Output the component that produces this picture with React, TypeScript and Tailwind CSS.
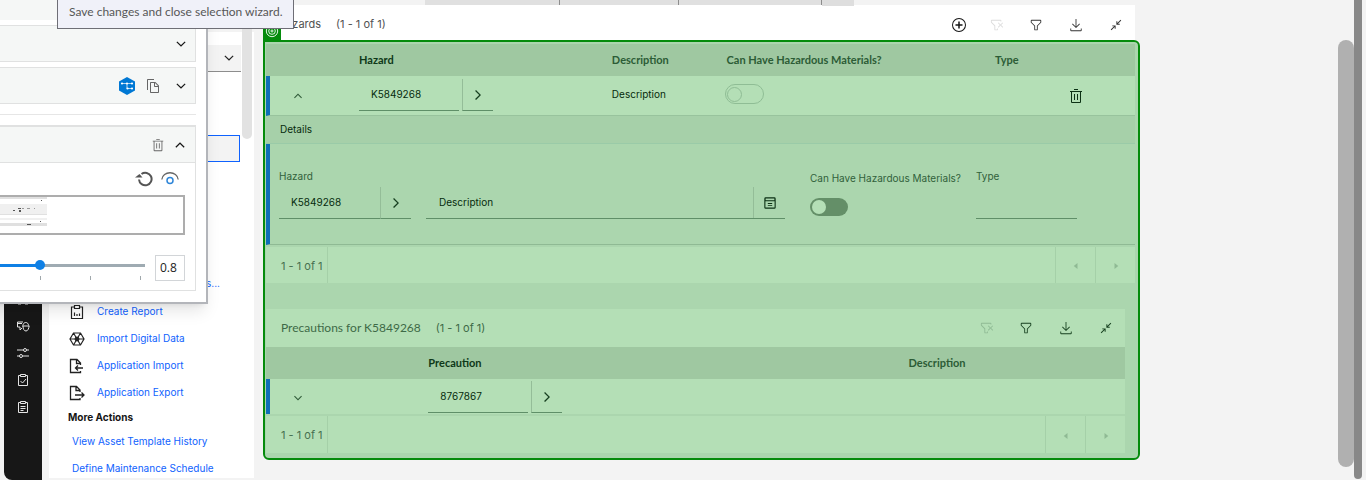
import React from "react";

type IconProps = { d: string; className?: string };

function Icon({ d, className = "size-4" }: IconProps) {
  return (
    <svg viewBox="0 0 32 32" className={`shrink-0 fill-current ${className}`} aria-hidden="true">
      <path d={d} />
    </svg>
  );
}

const paths = {
  down: "M16 22.500 5.500 12l2-2 8.500 8.500 8.500-8.500 2 2z",
  up: "M16 9.500 26.500 20l-2 2-8.500-8.500L7.500 22l-2-2z",
  right: "M22 16 12 26l-1.8-1.8 8.2-8.2-8.2-8.2L12 6z",
  add: "M16 4a12 12 0 1 1-12 12A12 12 0 0 1 16 4m0-2A14 14 0 1 0 30 16 14 14 0 0 0 16 2zM23 14.5h-5.500V9h-3v5.500H9v3h5.500V23h3v-5.500H23z",
  filter:
    "M18 28h-4a2 2 0 0 1-2-2v-7.590L4.590 11A2 2 0 0 1 4 9.590V6a2 2 0 0 1 2-2h20a2 2 0 0 1 2 2v3.590A2 2 0 0 1 27.410 11L20 18.410V26a2 2 0 0 1-2 2ZM6 6v3.590l8 8V26h4v-8.410l8-8V6Z",
  filterRemove:
    "M30 11.414 28.586 10 24 14.586 19.414 10 18 11.414 22.586 16 18 20.585 19.415 22 24 17.414 28.587 22 30 20.587 25.414 16zM4 4a2 2 0 0 0-2 2v3.170a2 2 0 0 0 .586 1.415L10 18v8a2 2 0 0 0 2 2h4a2 2 0 0 0 2-2v-2h-2v2h-4v-8.830l-.586-.585L4 9.170V6h20v2h2V6a2 2 0 0 0-2-2Z",
  download:
    "M27 24v4H5v-4H3v4a2 2 0 0 0 2 2h22a2 2 0 0 0 2-2v-4zM25 14l-1.410-1.410L17 19.170V2h-2v17.170l-6.590-6.580L7 14l9 9 9-9z",
  minimize:
    "M6 17v2.500h4.700L2 28.200 3.800 30l8.700-8.700V26H15v-9zM30 3.800 28.200 2l-8.700 8.700V6H17v9h9v-2.500h-4.700z",
  trash:
    "M12 12h2v12h-2zM18 12h2v12h-2zM4 6v2h2v20a2 2 0 0 0 2 2h16a2 2 0 0 0 2-2V8h2V6zM8 28V8h16v20zM12 2h8v2h-8z",
  caretLeft: "M20 24 10 16 20 8z",
  caretRight: "M12 8l10 8-10 8z",
  details:
    "M26 3H6a3 3 0 0 0-3 3v20a3 3 0 0 0 3 3h20a3 3 0 0 0 3-3V6a3 3 0 0 0-3-3zm0 2.500v4H6v-4zM5.500 26.500V12h21v14.500zM11 16h10v2H11zM11 21h10v2H11z",
  copy: "M27.400 14.700l-6.100-6.100C21 8.200 20.500 8 20 8h-8c-1.100 0-2 .9-2 2v18c0 1.100.9 2 2 2h14c1.100 0 2-.9 2-2V16.100c0-.500-.2-1-.6-1.400zM20 10l5.900 6H20v-6zm-8 18V10h6v6c0 1.100.9 2 2 2h6v10H12zM6 24H4V4c0-1.100.9-2 2-2h12v2H6v20z",
};

function Line({ children, className = "size-4", viewBox = "0 0 16 16" }: { children: React.ReactNode; className?: string; viewBox?: string }) {
  return (
    <svg viewBox={viewBox} fill="none" stroke="currentColor" className={`shrink-0 ${className}`} aria-hidden="true">
      {children}
    </svg>
  );
}

function IconButton({ label, d, className = "", size = "size-[14px]" }: { label: string; d: string; className?: string; size?: string }) {
  return (
    <button type="button" aria-label={label} className={`flex items-center justify-center ${className}`}>
      <Icon d={d} className={size} />
    </button>
  );
}

function Toolbar({ add = false, tone }: { add?: boolean; tone: string }) {
  return (
    <div className="flex items-center">
      {add && <IconButton label="Add row" d={paths.add} className="w-[38px] text-[#161616]" size="size-4" />}
      <IconButton label="Clear filter" d={paths.filterRemove} className={`w-[38px] ${tone}`} />
      <IconButton label="Filter" d={paths.filter} className="w-10" />
      <IconButton label="Download" d={paths.download} className="w-10" />
      <IconButton label="Collapse" d={paths.minimize} className="w-[39px]" size="size-3" />
    </div>
  );
}

function Lookup({ value, label, gap = "ml-[3px]", size = "w-[100px]" }: { value: string; label: string; gap?: string; size?: string }) {
  return (
    <div className="flex h-8">
      <input
        aria-label={label}
        defaultValue={value}
        className={`${size} border-b border-[#5f8f68] bg-transparent px-3 text-[10px] text-[#062b0d] outline-none`}
      />
      <IconButton label={`Look up ${label}`} d={paths.right} className={`${gap} w-[31px] border-b border-l border-b-[#5f8f68] border-l-[#94bd98] text-[#173f20]`} size="size-4" />
    </div>
  );
}

function Pager({ height = "h-9" }: { height?: string }) {
  return (
    <div className={`mt-0.5 flex ${height} items-stretch bg-[#b4dfb6] text-[11px] text-[#467050]`}>
      <span className="flex w-[62px] items-center border-r border-[#a5d0a8] pl-[15px] pt-0.5">1 - 1 of 1</span>
      <span className="flex-1" />
      <IconButton label="Previous page" d={paths.caretLeft} className="w-10 border-l border-[#a5d0a8] pt-0.5 text-[#8fba94]" size="size-3" />
      <IconButton label="Next page" d={paths.caretRight} className="w-10 border-l border-[#a5d0a8] pt-0.5 text-[#8fba94]" size="size-3" />
    </div>
  );
}

function NavRail() {
  return (
    <nav aria-label="Main" className="ml-1 flex w-[38px] flex-col items-center gap-[11px] rounded-bl-lg bg-[#171717] pt-[291px] text-[#e4e4e4]">
      <a href="#home" aria-label="Home">
        <Line><path d="M3 7l5-4 5 4v6h-3V9H6v4H3z" /></Line>
      </a>
      <a href="#assets" aria-label="Assets">
        <Line><path d="M8 4H2.500v5H5v3l2-2M2.500 5.500H7M7 8h7.500M8 7.500c0-4 5.500-4 5.500 0M8 8c0 3 1 5 3 5s3-3 3-5" /></Line>
      </a>
      <a href="#settings" aria-label="Settings">
        <Line><path d="M2 5h6.500M11.500 5H14M2 11h2.500M7.500 11H14" /><circle cx="10" cy="5" r="1.500" /><circle cx="6" cy="11" r="1.500" /></Line>
      </a>
      <a href="#tasks" aria-label="Tasks">
        <Line><path d="M5.500 3.500h-2v10h9v-10h-2M5.500 2.500h5v2h-5zM5.500 9l2 2 3.500-4" /></Line>
      </a>
      <a href="#plans" aria-label="Plans">
        <Line><path d="M5.500 3.500h-2v10h9v-10h-2M5.500 2.500h5v2h-5zM5.500 7.500h5M5.500 9.500h5M5.500 11.500h3" /></Line>
      </a>
    </nav>
  );
}

function ActionLink({ text, children }: { text: string; children: React.ReactNode }) {
  return (
    <li>
      <a href="#action" className="flex h-[27px] items-center gap-3 pl-5 text-[#0f62fe]">
        <span className="text-[#222]">{children}</span>
        {text}
      </a>
    </li>
  );
}

function SidePanel() {
  return (
    <aside className="relative mb-0.5 ml-[7px] w-[205px] overflow-hidden bg-white text-[10px]">
      <div className="h-8 border-b-[3px] border-[#f3f3f3]" />
      <button type="button" aria-label="Choose query" className="mt-[13px] flex h-[27px] w-48 items-center justify-end border-b border-[#8d8d8d] bg-[#f3f3f3] pr-[5px] text-[#222]">
        <Icon d={paths.down} className="size-[14px]" />
      </button>
      <button type="button" aria-label="Selected view" className="mt-[63px] block h-[27px] w-[191px] border border-[#0f62fe] bg-[#f3f3f3]" />
      <a href="#more" className="mt-[107px] flex h-7 w-[171px] items-center justify-end text-[#0f62fe]">s...</a>
      <ul className="pt-px">
        <ActionLink text="Create Report">
          <Line><path d="M5.500 3h-3v11.500h11V3h-3M5.500 1.500h5v3h-5zM5.500 12V8.500M8 12v-2M10.500 12V9.500" strokeWidth="1.200" /></Line>
        </ActionLink>
        <ActionLink text="Import Digital Data">
          <Line><path d="M4.500 2h7L15 8l-3.500 6h-7L1 8zM1 8h14M4.500 2l7 12M11.500 2l-7 12" strokeWidth="1.200" /><circle cx="8" cy="8" r="2" fill="currentColor" /></Line>
        </ActionLink>
        <ActionLink text="Application Import">
          <Line><path d="M11.500 7V5L8 1.500H1.500v13h10V13M7.500 1.500v4h4M14 10H6.500M9 7.500 6.500 10 9 12.500" strokeWidth="1.300" /></Line>
        </ActionLink>
        <ActionLink text="Application Export">
          <Line><path d="M11 7V5L7.500 1.500h-6v13H11V13M7 1.500v4h4M6 10h9M12.500 7.500 15 10l-2.500 2.500" strokeWidth="1.300" /></Line>
        </ActionLink>
      </ul>
      <h2 className="flex h-[22px] items-center pl-[19px] pt-px font-bold text-[#161616]">More Actions</h2>
      <ul className="pl-[23px] text-[#0f62fe]">
        <li><a href="#history" className="flex h-[27px] items-center">View Asset Template History</a></li>
        <li><a href="#schedule" className="flex h-[27px] items-center">Define Maintenance Schedule</a></li>
      </ul>
      <div className="absolute right-0.5 top-0 h-[139px] w-[10px] rounded-b-full bg-[#e2e2e2]" />
    </aside>
  );
}

const th = "h-8 p-0 pt-px text-left font-[Lato,sans-serif] text-[11px] font-bold text-[#2c5c36]";

function HazardTable() {
  return (
    <table className="w-full table-fixed border-separate border-spacing-0 bg-[#b4dfb6]">
      <thead className="bg-[#9fc8a1]">
        <tr>
          <th className={`${th} w-[10.7%]`} aria-label="Expand" />
          <th className={`${th} w-[29.1%]`}><span className="text-[#0e3818]">Hazard</span></th>
          <th className={`${th} w-[13.2%]`}>Description</th>
          <th className={`${th} w-[30.9%]`}>Can Have Hazardous Materials?</th>
          <th className={th}>Type</th>
        </tr>
      </thead>
      <tbody>
        <tr className="text-[10px] text-[#062b0d]">
          <td className="h-10 border-b border-l-4 border-b-[#98c39d] border-l-[#0e6eb8] p-0">
            <IconButton label="Collapse row" d={paths.up} className="ml-[22px] text-[#2f5b38]" size="size-3" />
          </td>
          <td className="border-b border-[#98c39d] p-0 pb-px"><Lookup value="K5849268" label="Hazard" /></td>
          <td className="border-b border-[#98c39d] p-0 pb-[3px]">Description</td>
          <td className="border-b border-[#98c39d] p-0 pb-[3px]">
            <button type="button" role="switch" aria-checked="false" aria-label="Can Have Hazardous Materials?" className="-ml-0.5 flex h-5 w-[39px] items-center rounded-full border border-[#8fbd95] pl-px">
              <span className="size-[15px] rounded-full border border-[#8fbd95]" />
            </button>
          </td>
          <td className="border-b border-[#98c39d] p-0">
            <IconButton label="Delete row" d={paths.trash} className="ml-[73px] text-[#0c3114]" size="size-4" />
          </td>
        </tr>
      </tbody>
    </table>
  );
}

function HazardDetails() {
  return (
    <>
      <h3 className="flex h-7 items-center border-b border-[#9acba8] bg-[#a6d0a9] pl-[14px] text-[10px] text-[#062b0d]">Details</h3>
      <div className="flex h-[101px] items-start border-b border-l-4 border-b-[#8fba94] border-l-[#0e6eb8] pl-[9px] pr-[58px] pt-6 text-[10px] text-[#31613b]">
        <div className="w-[132px]">
          <div className="mb-[3px] h-4 leading-4">Hazard</div>
          <Lookup value="K5849268" label="Hazard detail" gap="ml-0" size="w-[101px]" />
        </div>
        <div className="ml-[15px] mt-[19px] flex h-8 flex-1 border-b border-[#5f8f68]">
          <input aria-label="Description" defaultValue="Description" className="min-w-0 flex-1 bg-transparent px-[13px] text-[#062b0d] outline-none" />
          <IconButton label="Long description" d={paths.details} className="w-8 border-l border-[#94bd98] text-[#0c3114]" />
        </div>
        <div className="ml-[25px] w-[166px]">
          <div className="mb-3 mt-0.5 h-4 whitespace-nowrap leading-4">Can Have Hazardous Materials?</div>
          <button type="button" role="switch" aria-checked="false" aria-label="Can Have Hazardous Materials?" className="flex h-[18px] w-[38px] items-center rounded-full bg-[#648f68] pl-0.5">
            <span className="size-[14px] rounded-full bg-[#b4dfb6]" />
          </button>
        </div>
        <label className="block w-[101px]">
          <span className="mb-[3px] block h-4 leading-4">Type</span>
          <input className="h-8 w-full border-b border-[#5f8f68] bg-transparent outline-none" />
        </label>
      </div>
    </>
  );
}

function Precautions() {
  return (
    <section className="mr-[10px] mt-[26px]">
      <header className="flex h-[38px] items-center justify-between bg-[#b4dfb6] pl-[15px] text-[#16401f]">
        <h3 className="flex items-center gap-[15px] font-[Lato,sans-serif] text-xs text-[#3e6a47]">
          Precautions for K5849268 <span className="font-[Inter,sans-serif] text-[11px]">(1 - 1 of 1)</span>
        </h3>
        <Toolbar tone="text-[#8fba94]" />
      </header>
      <table className="w-full table-fixed border-separate border-spacing-0 bg-[#b4dfb6]">
        <thead className="bg-[#9fc8a1]">
          <tr>
            <th className={`${th} w-[18.9%]`} aria-label="Expand" />
            <th className={`${th} w-[55.9%]`}><span className="text-[#0e3818]">Precaution</span></th>
            <th className={th}>Description</th>
          </tr>
        </thead>
        <tbody>
          <tr>
            <td className="h-[35px] border-l-4 border-[#0e6eb8] p-0 pt-0.5">
              <IconButton label="Expand row" d={paths.down} className="ml-[22px] text-[#2f5b38]" size="size-3" />
            </td>
            <td className="p-0 pt-px"><Lookup value="8767867" label="Precaution" /></td>
            <td className="p-0" />
          </tr>
        </tbody>
      </table>
      <Pager height="h-[37px]" />
    </section>
  );
}

function Workspace() {
  return (
    <main className="ml-[9px] min-w-0 flex-1">
      <div className="ml-[162px] flex h-[5px] items-start">
        <div className="h-full w-[135px] border-r border-[#8d8d8d] bg-[#e0e0e0]" />
        <div className="h-full w-[119px] border-r border-[#8d8d8d] bg-[#e0e0e0]" />
        <div className="h-full w-[143px] border-r border-[#8d8d8d] bg-[#e0e0e0]" />
        <div className="h-1.5 w-8 bg-[#dedede]" />
      </div>
      <header className="ml-0.5 mr-[5px] flex h-[35px] items-center justify-between bg-white pl-[13px] text-[#333]">
        <h2 className="flex items-center gap-[15px] pt-1 text-[11px] text-[#525252]">
          <span>Hazards</span> <span>(1 - 1 of 1)</span>
        </h2>
        <div className="pt-1"><Toolbar add tone="text-[#dcdcdc]" /></div>
      </header>
      <div className="relative">
        <div className="absolute -top-[18px] left-0 flex h-[18px] w-[18px] items-center justify-center bg-[#058b0c] text-white">
          <Line className="size-[14px]"><circle cx="8" cy="8" r="6.500" /><circle cx="8" cy="8" r="3.800" /><circle cx="8" cy="8" r="1.200" /></Line>
        </div>
        <section className="rounded-b-md rounded-tr-md border-2 border-[#058b0c] bg-[#abd6ae] pb-[5px] pl-px pr-[3px] pt-0.5">
          <HazardTable />
          <HazardDetails />
          <Pager />
          <Precautions />
        </section>
      </div>
    </main>
  );
}

function WizardCard({ children, className = "" }: { children?: React.ReactNode; className?: string }) {
  return (
    <div className={`flex h-[37px] items-center justify-end border border-[#e0e1e1] bg-[#f5f7f6] pr-[7px] text-[#161616] ${className}`}>
      {children}
    </div>
  );
}

function Wizard() {
  return (
    <div className="absolute -left-[380px] top-0 w-[588px] border-b-2 border-r-2 border-[#b3b5ba] bg-white pb-[11px] pl-4 pr-[10px] shadow-lg">
      <div className="h-5 bg-[#f5f7f6]" />
      <WizardCard className="mt-[5px]">
        <IconButton label="Expand section" d={paths.down} />
      </WizardCard>
      <WizardCard className="mt-[5px]">
        <button type="button" aria-label="Component tree">
          <svg viewBox="0 0 18 18" className="size-[18px]" aria-hidden="true">
            <path d="M9 0l8 4.500v9L9 18l-8-4.500v-9z" fill="#0078d4" />
            <path d="M4 6.500h10M9 6.500v5h5" stroke="#fff" strokeWidth=".7" fill="none" />
            <g fill="#fff"><circle cx="4" cy="6.500" r="1.100" /><circle cx="9" cy="6.500" r="1.100" /><circle cx="14" cy="6.500" r="1.100" /><circle cx="9.500" cy="11.500" r="1.100" /><circle cx="14" cy="11.500" r="1.100" /></g>
          </svg>
        </button>
        <IconButton label="Copy" d={paths.copy} className="ml-[9px] mr-[13px] text-[#666]" size="size-4" />
        <IconButton label="Expand section" d={paths.down} />
      </WizardCard>
      <hr className="mt-[10px] border-[#e6e6e6]" />
      <div className="mt-[10px] border border-t-2 border-[#e0e1e1]">
        <div className="flex h-9 items-center justify-end gap-2 border-b border-[#e0e1e1] bg-[#f5f7f6] pr-2">
          <IconButton label="Delete" d={paths.trash} className="text-[#666]" />
          <IconButton label="Collapse section" d={paths.up} className="text-[#161616]" />
        </div>
        <div className="pb-[9px] pr-[10px]">
          <div className="flex h-8 items-center justify-end gap-2 pr-1.5">
            <button type="button" aria-label="Reset" className="text-[#555]">
              <Line className="size-[18px]" viewBox="0 0 18 18"><path d="M4 9.500A6.300 6.300 0 1 0 6.500 4" strokeWidth="2" /><path d="M0 7.500h7.500L4.500 4z" fill="currentColor" stroke="none" /></Line>
            </button>
            <button type="button" aria-label="Preview" className="text-[#666]">
              <Line className="size-[18px]" viewBox="0 0 18 18"><path d="M.8 9.500C1.500 .5 16.500 .5 17.200 9.500" strokeWidth="1.300" /><circle cx="9" cy="10.500" r="3" stroke="#2f86d8" strokeWidth="1.500" /></Line>
            </button>
          </div>
          <div className="flex h-10 border-2 border-[#adadad] bg-white">
            <svg viewBox="0 0 408 36" className="h-9 w-[408px]" aria-hidden="true">
              <path fill="#e0e0e0" d="M0 0h408v2H0zM0 16.500h408v1.500H0zM0 26h408v3H0z" />
              <path fill="#f0f0f0" d="M0 7h408v10H0zM0 21h408v2H0z" />
              <path fill="#555" d="M402 3h1v1h-1zM374 13h2v1h-2zM380 13h2v2h-2zM379 11h3v1h-3zM388 27h4v1h-4zM401 24h1v1h-1z" />
              <path fill="#999" d="M383 11h2v1h-2zM388 11h3v1h-3zM395 11h1v1h-1z" />
            </svg>
          </div>
          <div className="mt-5 flex items-start gap-[10px]">
            <div className="flex-1">
              <input
                type="range"
                aria-label="Accuracy"
                min="0"
                max="1"
                step="0.1"
                defaultValue="0.8"
                className="mt-[5px] block h-[10px] w-full appearance-none bg-[linear-gradient(90deg,#0f80e5_79%,#9fabb2_79%)] bg-[length:100%_3px] bg-center bg-no-repeat [&::-webkit-slider-thumb]:size-[10px] [&::-webkit-slider-thumb]:appearance-none [&::-webkit-slider-thumb]:rounded-full [&::-webkit-slider-thumb]:bg-[#0f80e5]"
              />
              <div className="mt-[6px] flex justify-end gap-[49px] pr-1">
                <i className="h-1 w-px bg-[#a0a8ac]" />
                <i className="h-1 w-px bg-[#a0a8ac]" />
                <i className="h-1 w-px bg-[#a0a8ac]" />
              </div>
            </div>
            <input aria-label="Accuracy value" defaultValue="0.8" className="h-[26px] w-[30px] border border-[#d2d5d8] px-1 pb-0.5 font-['Open_Sans',sans-serif] text-xs text-[#222]" />
          </div>
        </div>
      </div>
    </div>
  );
}

export default function App() {
  return (
    <div className="relative flex h-screen overflow-hidden bg-[#f3f3f3] font-[Inter,sans-serif]">
      <NavRail />
      <SidePanel />
      <Workspace />
      <div className="ml-[198px] mr-1 flex w-6">
        <div className="mb-[13px] mt-10 w-4 rounded-full bg-[#b0b0b0]" />
        <div className="mb-px w-2 rounded-b bg-[#888]" />
      </div>
      <Wizard />
      <div role="tooltip" className="absolute left-[57px] top-0 flex h-[29px] items-center border border-t-0 border-[#6e6e76] bg-[#f0f1f9] px-[11px] pb-1 font-[Lato,sans-serif] text-xs text-[#575757]">
        Save changes and close selection wizard.
      </div>
    </div>
  );
}
